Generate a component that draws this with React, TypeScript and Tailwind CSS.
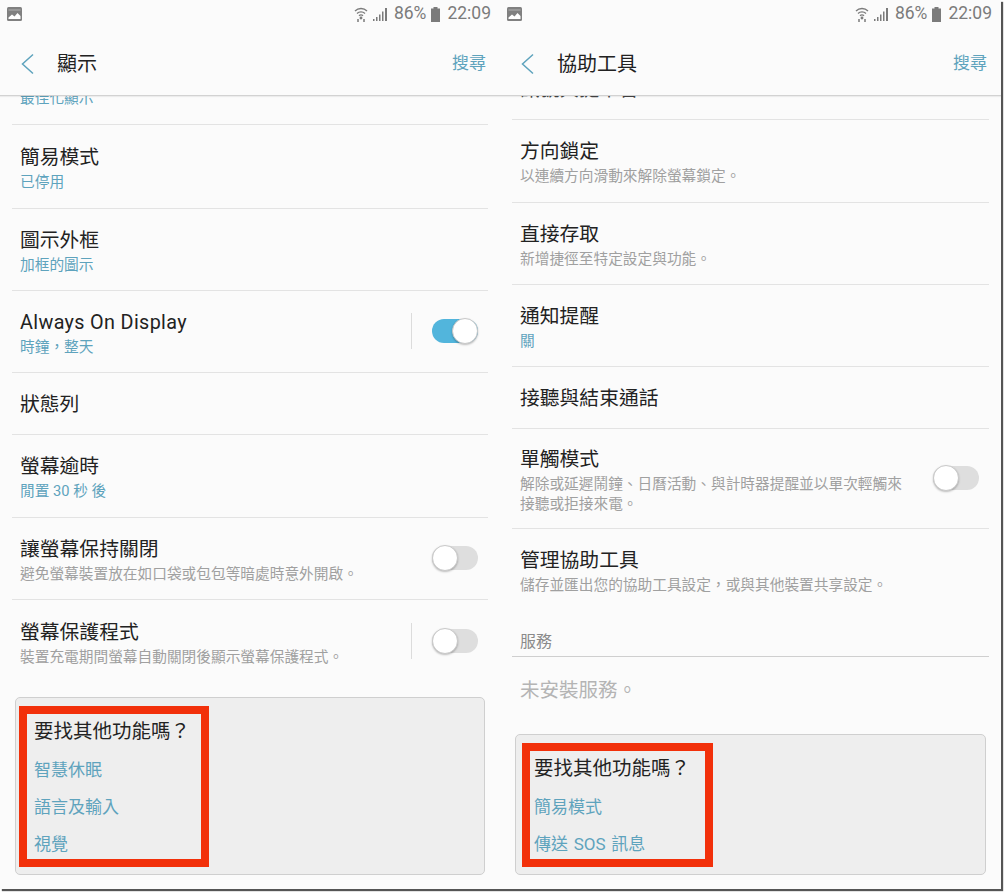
const F = '"Roboto","Noto Sans CJK TC","Liberation Sans",sans-serif';

function Status() {
  return (
    <div className="flex h-[28px] items-center justify-between pl-[7px] pr-[9px] text-[#7b7b7b]">
      <svg width="15" height="14" viewBox="0 0 15 14"><rect x="0" y="0" width="15" height="14" rx="1.5" fill="#808080" /><path d="M1.5 10.5l3.5-3 2.5 2 3-3.5 3 3V12h-12z" fill="#fff" /><rect x="1.5" y="2" width="12" height="2" fill="#999" /></svg>
      <div className="flex items-center">
        <svg width="14" height="16" viewBox="0 0 14 16" className="mr-[5px]" fill="none" stroke="#7b7b7b" strokeWidth="1.3"><path d="M1 5a8.5 8.5 0 0 1 12 0" /><path d="M3 7.5a5.6 5.6 0 0 1 8 0" /><path d="M5 9.8a2.8 2.8 0 0 1 4 0" /><path d="M4 13v3M10 13v3" strokeWidth="1.5" /><circle cx="7" cy="12" r=".8" fill="#7b7b7b" /></svg>
        <svg width="15" height="14" viewBox="0 0 15 14" className="mr-[6px]" fill="#7b7b7b"><path d="M0 12h1.5v2H0zM3 10h1.5v4H3zM6 7.5h1.5V14H6zM9 4.5h1.5V14H9zM12 1h2v13h-2z" /></svg>
        <span className="text-[17.5px] leading-none">86%</span>
        <svg width="9" height="15" viewBox="0 0 9 15" className="ml-[5px] mr-[7px]"><rect x="2.5" y="0" width="4" height="2" fill="#7b7b7b" /><rect x="0" y="1.5" width="9" height="13.5" fill="#7b7b7b" /></svg>
        <span className="text-[17.5px] leading-none">22:09</span>
      </div>
    </div>
  );
}

function Header({ title }: { title: string }) {
  return (
    <div className="relative z-10 border-b border-[#d2d2d2] bg-[#fbfbfb] shadow-[0_1px_1px_rgba(0,0,0,0.06)]">
      <Status />
      <div className="flex h-[67px] items-center justify-between pl-[21px] pr-[14px] pt-[4px]">
        <div className="flex items-center">
          <svg width="13" height="22" viewBox="0 0 13 22" fill="none" stroke="#5ea3bd" strokeWidth="1.5"><path d="M12 1.5L1.5 11 12 20.5" /></svg>
          <span className="ml-[23px] text-[20px] text-[#222]">{title}</span>
        </div>
        <span className="text-[17px] text-[#5ea3bd]">搜尋</span>
      </div>
    </div>
  );
}

function Toggle({ on, sep }: { on?: boolean; sep?: boolean }) {
  return (
    <div className="-mt-[5px] flex items-center">
      {sep && <div className="mr-[20px] h-[36px] w-px bg-[#dcdcdc]" />}
      <div className={`relative h-[24px] w-[46px] rounded-full ${on ? 'bg-[#52b5dc]' : 'bg-[#dedede]'}`}>
        <div className={`absolute top-[-1px] h-[26px] w-[26px] rounded-full border border-[#c9c9c9] bg-white shadow-[0_1px_2px_rgba(0,0,0,0.25)] ${on ? 'right-0' : 'left-0'}`} />
      </div>
    </div>
  );
}

function Row({ title, sub, subBlue, h, toggle, titleClass = '' }: { title: string; sub?: React.ReactNode; subBlue?: boolean; h: string; toggle?: React.ReactNode; titleClass?: string }) {
  return (
    <div className={`mx-[12px] flex items-center justify-between border-b border-[#e3e3e3] pl-[8px] pr-[10px] pt-[3px] ${h}`}>
      <div>
        <div className={`text-[19.8px] leading-[26px] text-[#222] ${titleClass}`}>{title}</div>
        {sub && <div className={`mt-[1px] text-[14.7px] leading-[20px] ${subBlue ? 'text-[#5ea3bd]' : 'text-[#a0a0a0]'}`}>{sub}</div>}
      </div>
      {toggle}
    </div>
  );
}

function Card({ title, links, box, h, mt }: { title: string; links: string[]; box: string; h: string; mt: string }) {
  return (
    <div className={`relative mx-[15px] rounded-[5px] border border-[#cfcfcf] bg-[#eeeeee] pl-[18px] pt-[21px] ${h} ${mt}`}>
      <div className="text-[19.5px] leading-[26px] text-[#222]">{title}</div>
      <div className="mt-[12px] flex flex-col gap-[11px]">
        {links.map((l) => (
          <div key={l} className="text-[17px] leading-[26px] text-[#5ea3bd] [word-spacing:1.5px]">{l}</div>
        ))}
      </div>
      <div className={`absolute border-[8px] border-[#f2300a] ${box}`} />
    </div>
  );
}

export default function App() {
  return (
    <div className="h-[893px] w-[1004px] overflow-hidden bg-white" style={{ fontFamily: F }}>
      <div className="flex h-[889px] w-[1001px] bg-[#fbfbfb] shadow-[2px_2px_1px_#555]">
        <div className="w-[500px] overflow-hidden">
          <Header title="顯示" />
          <div className="h-[792px] overflow-hidden">
            <div className="mx-[12px] h-[29px] overflow-hidden border-b border-[#e3e3e3] pl-[8px] text-[14.7px] leading-[20px] text-[#5ea3bd]">
              <div className="-mt-[8px]">最佳化顯示</div>
            </div>
            <Row title="簡易模式" sub="已停用" subBlue h="h-[84px]" />
            <Row title="圖示外框" sub="加框的圖示" subBlue h="h-[82px]" />
            <Row title="Always On Display" titleClass="tracking-[0.35px]" sub="時鐘，整天" subBlue h="h-[82px]" toggle={<Toggle on sep />} />
            <Row title="狀態列" h="h-[62px]" />
            <Row title="螢幕逾時" sub="閒置 30 秒 後" subBlue h="h-[83px]" />
            <Row title="讓螢幕保持關閉" sub="避免螢幕裝置放在如口袋或包包等暗處時意外開啟。" h="h-[82px]" toggle={<Toggle />} />
            <div className="mx-[12px] flex h-[83px] items-center justify-between pl-[8px] pr-[10px] pt-[3px]">
              <div>
                <div className="text-[19.8px] leading-[26px] text-[#222]">螢幕保護程式</div>
                <div className="mt-[1px] text-[14.7px] leading-[20px] text-[#a0a0a0]">裝置充電期間螢幕自動關閉後顯示螢幕保護程式。</div>
              </div>
              <Toggle sep />
            </div>
            <Card title="要找其他功能嗎？" links={['智慧休眠', '語言及輸入', '視覺']} box="left-[3px] top-[8px] h-[161px] w-[190px]" h="h-[178px]" mt="mt-[14px]" />
          </div>
        </div>
        <div className="w-[501px] overflow-hidden">
          <Header title="協助工具" />
          <div className="h-[792px] overflow-hidden">
            <div className="mx-[12px] h-[24px] overflow-hidden border-b border-[#e3e3e3] pl-[8px] text-[19.8px] leading-[26px] text-[#444]">
              <div className="-mt-[19px]">訊號與提示音</div>
            </div>
            <Row title="方向鎖定" sub="以連續方向滑動來解除螢幕鎖定。" h="h-[83px]" />
            <Row title="直接存取" sub="新增捷徑至特定設定與功能。" h="h-[82px]" />
            <Row title="通知提醒" sub="關" subBlue h="h-[82px]" />
            <Row title="接聽與結束通話" h="h-[62px]" />
            <Row title="單觸模式" sub={<>解除或延遲鬧鐘、日曆活動、與計時器提醒並以單次輕觸來<br />接聽或拒接來電。</>} h="h-[100px]" toggle={<Toggle />} />
            <div className="mx-[12px] flex h-[81px] items-center pl-[8px] pt-[3px]">
              <div>
                <div className="text-[19.8px] leading-[26px] text-[#222]">管理協助工具</div>
                <div className="mt-[1px] text-[14.7px] leading-[20px] text-[#a0a0a0]">儲存並匯出您的協助工具設定，或與其他裝置共享設定。</div>
              </div>
            </div>
            <div className="mx-[12px] mt-[18px] h-[29px] border-b border-[#cfcfcf] pl-[8px] pt-[2px] text-[16px] leading-[24px] text-[#8a8a8a]">服務</div>
            <div className="pl-[20px] pt-[20px] text-[19.5px] leading-[28px] text-[#b4b4b4]">未安裝服務。</div>
            <Card title="要找其他功能嗎？" links={['簡易模式', '傳送 SOS 訊息']} box="left-[6px] top-[8px] h-[124px] w-[191px]" h="h-[141px]" mt="mt-[29px]" />
          </div>
        </div>
      </div>
    </div>
  );
}
